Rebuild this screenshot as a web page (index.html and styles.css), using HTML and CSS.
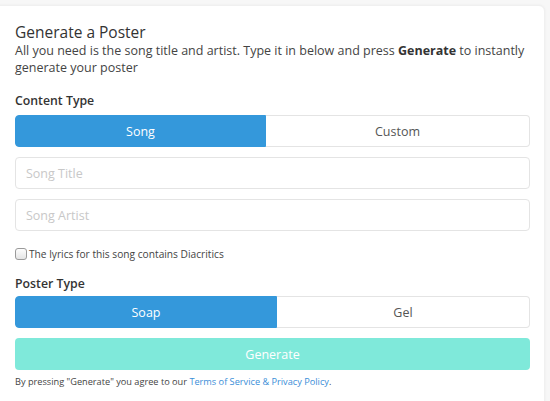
FILE: index.html
```html
<!DOCTYPE html>
<html>
<head>
<meta charset="utf-8">
<link rel="stylesheet" href="styles.css">
</head>
<body>
<div class="card">
  <h1 class="title">Generate a Poster</h1>
  <p class="lead">All you need is the song title and artist. Type it in below and press <b>Generate</b> to instantly generate your poster</p>

  <div class="label label-first">Content Type</div>
  <div class="toggle">
    <button class="opt active song">Song</button>
    <button class="opt custom">Custom</button>
  </div>

  <input class="field" type="text" placeholder="Song Title">
  <input class="field" type="text" placeholder="Song Artist">

  <label class="check"><span class="box"></span>The lyrics for this song contains Diacritics</label>

  <div class="label label-second">Poster Type</div>
  <div class="toggle">
    <button class="opt active soap">Soap</button>
    <button class="opt gel">Gel</button>
  </div>

  <button class="generate">Generate</button>
  <p class="terms">By pressing "Generate" you agree to our <a href="#">Terms of Service &amp; Privacy Policy</a>.</p>
</div>
</body>
</html>
```

FILE: styles.css
```css
html, body {
  margin: 0;
  padding: 0;
  background: #f7f7f7;
  font-family: "Open Sans", "Noto Sans", sans-serif;
  color: #444;
}

.card {
  box-sizing: border-box;
  width: 553px;
  height: 420px;
  margin: 5px 0 0 -8px;
  padding: 16px 14px 20px 22px;
  background: #fff;
  border-radius: 6px;
  border: 1px solid #f0f0f0;
  box-shadow: 0 0 3px rgba(0,0,0,0.05);
}

.title {
  margin: 0;
  font-size: 15.5px;
  font-weight: 400;
  line-height: 20px;
  color: #333;
}

.lead {
  margin: 0;
  font-size: 12.5px;
  line-height: 17px;
  color: #444;
}
.lead b { font-weight: 700; color: #333; }

.label {
  font-size: 12.3px;
  font-weight: 600;
  color: #333;
  line-height: 18px;
}
.label-first { margin: 16px 0 5px; }
.label-second { margin: 14px 0 3px; }

.toggle {
  display: flex;
  height: 32px;
}

.opt {
  font-family: inherit;
  font-size: 12.5px;
  color: #555;
  background: #fff;
  border: 1px solid #e4e4e4;
  margin: 0;
  padding: 0;
}
.opt.active {
  background: #3498db;
  border-color: #3498db;
  color: #fff;
}
.song { flex: 0 0 251px; border-radius: 4px 0 0 4px; }
.custom { flex: 1; border-radius: 0 4px 4px 0; border-left: none; }
.soap { flex: 0 0 262px; border-radius: 4px 0 0 4px; }
.gel { flex: 1; border-radius: 0 4px 4px 0; border-left: none; }

.field {
  display: block;
  box-sizing: border-box;
  width: 100%;
  height: 32px;
  margin-top: 10px;
  padding: 0 10px;
  font-family: inherit;
  font-size: 12.5px;
  border: 1px solid #e4e4e4;
  border-radius: 4px;
  color: #444;
  outline: none;
}
.field::placeholder { color: #c8c8c8; }

.check {
  display: flex;
  align-items: center;
  margin-top: 16px;
  font-size: 10.2px;
  color: #444;
  line-height: 14px;
}
.box {
  box-sizing: border-box;
  width: 12px;
  height: 12px;
  border: 1px solid #9a9a9a;
  border-radius: 3px;
  background: linear-gradient(#fdfdfd, #e4e4e4);
  margin-right: 2px;
}

.generate {
  display: block;
  width: 100%;
  height: 32px;
  margin-top: 10px;
  border: none;
  border-radius: 4px;
  background: #7fe9da;
  color: #fff;
  font-family: inherit;
  font-size: 12.5px;
  padding: 0;
}

.terms {
  margin: 5px 0 0;
  font-size: 9.2px;
  line-height: 14px;
  color: #444;
}
.terms a { color: #3a8ed8; text-decoration: none; }
```
